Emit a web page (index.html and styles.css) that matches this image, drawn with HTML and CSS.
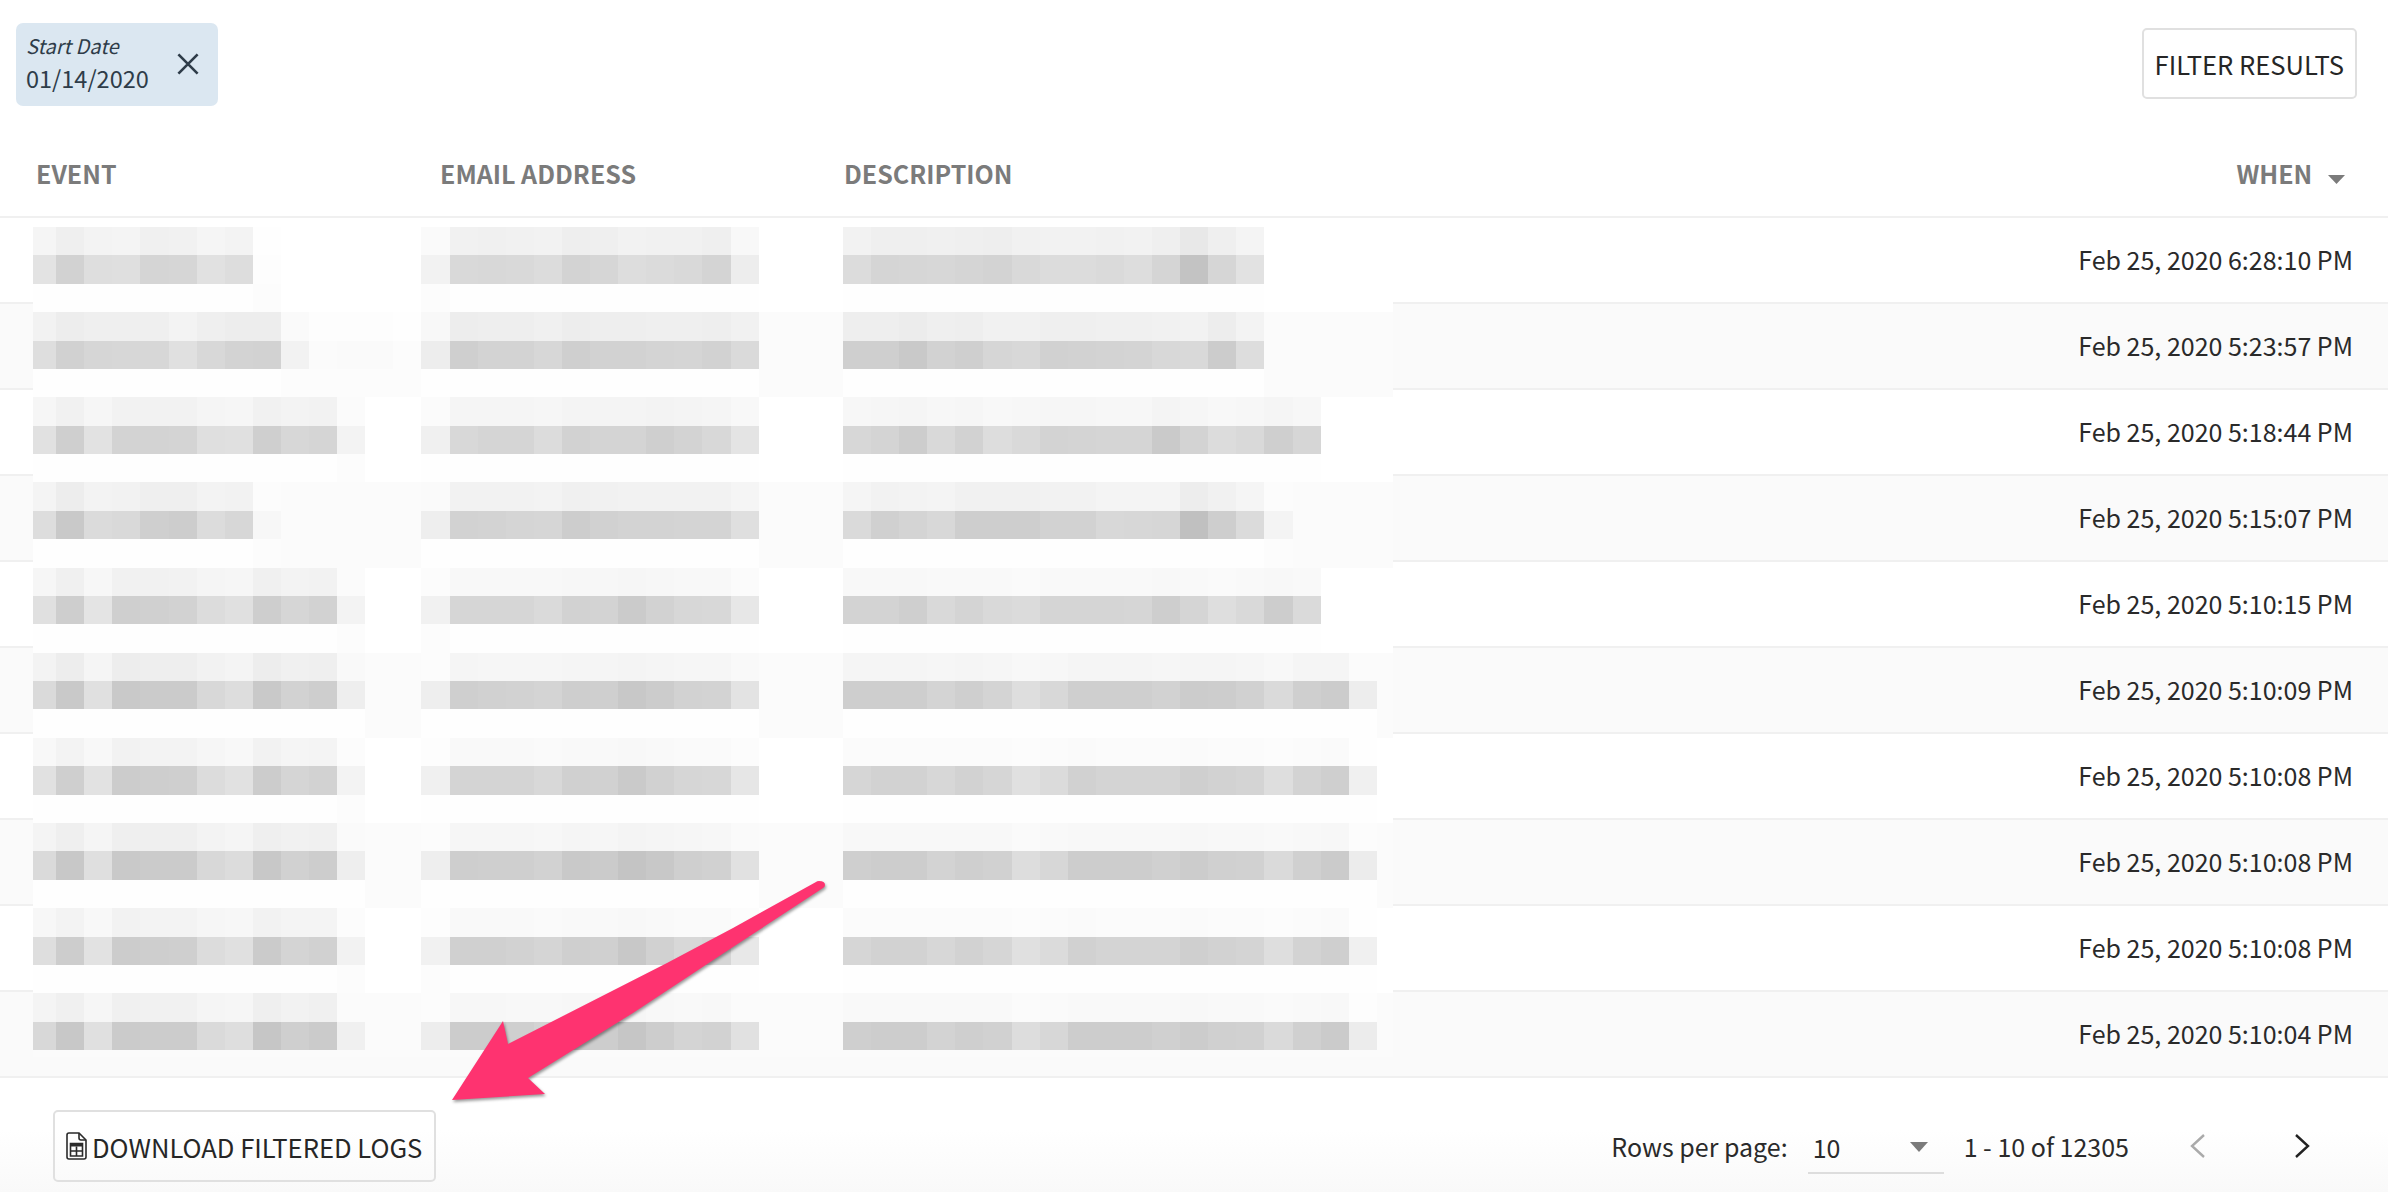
FILE: index.html
```html
<!DOCTYPE html>
<html>
<head>
  <meta charset="UTF-8">
  <title>Audit logs</title>
  <link rel="stylesheet" href="styles.css">
</head>
<body>
  <div class="page">

    <div class="filters">
      <div class="chip">
        <div class="chip-text">
          <div class="chip-label">Start Date</div>
          <div class="chip-value">01/14/2020</div>
        </div>
        <svg class="chip-close" viewBox="0 0 20 20"><path d="M2 2L18 18M18 2L2 18"/></svg>
      </div>
      <button class="btn btn-filter">FILTER RESULTS</button>
    </div>

    <div class="table">
      <div class="row head">
        <div>EVENT</div>
        <div>EMAIL ADDRESS</div>
        <div>DESCRIPTION</div>
        <div class="when">WHEN <svg class="sort" viewBox="0 0 17 9"><path d="M0 0H17L8.5 9Z"/></svg></div>
      </div>
      <div class="row"><div></div><div></div><div></div><div class="when">Feb 25, 2020 6:28:10 PM</div></div>
      <div class="row"><div></div><div></div><div></div><div class="when">Feb 25, 2020 5:23:57 PM</div></div>
      <div class="row"><div></div><div></div><div></div><div class="when">Feb 25, 2020 5:18:44 PM</div></div>
      <div class="row"><div></div><div></div><div></div><div class="when">Feb 25, 2020 5:15:07 PM</div></div>
      <div class="row"><div></div><div></div><div></div><div class="when">Feb 25, 2020 5:10:15 PM</div></div>
      <div class="row"><div></div><div></div><div></div><div class="when">Feb 25, 2020 5:10:09 PM</div></div>
      <div class="row"><div></div><div></div><div></div><div class="when">Feb 25, 2020 5:10:08 PM</div></div>
      <div class="row"><div></div><div></div><div></div><div class="when">Feb 25, 2020 5:10:08 PM</div></div>
      <div class="row"><div></div><div></div><div></div><div class="when">Feb 25, 2020 5:10:08 PM</div></div>
      <div class="row"><div></div><div></div><div></div><div class="when">Feb 25, 2020 5:10:04 PM</div></div>
    </div>

    <div class="footer">
      <button class="btn btn-download">
        <svg class="doc" viewBox="0 0 21 28">
          <path class="doc-line" d="M3 1H13L20 8V25a2 2 0 0 1-2 2H3a2 2 0 0 1-2-2V3a2 2 0 0 1 2-2Z"/>
          <path class="doc-line" d="M13 1V6a2 2 0 0 0 2 2H20"/>
          <path class="doc-line" d="M4.5 11.5H16.5V24H4.5ZM4.5 19H16.5M10.5 14.5V24"/>
          <path class="doc-fill" d="M4.5 11.5H16.5V14.5H4.5Z"/>
        </svg>
        DOWNLOAD FILTERED LOGS
      </button>
      <div class="pager">
        <span class="rows-label">Rows per page:</span>
        <div class="rows-select">
          <span>10</span>
          <svg class="select-arrow" viewBox="0 0 18 10"><path d="M0 0H18L9 10Z"/></svg>
        </div>
        <span class="range">1 - 10 of 12305</span>
        <svg class="chev chev-off" viewBox="0 0 16 24"><path d="M14 1L2 12L14 23"/></svg>
        <svg class="chev chev-on" viewBox="0 0 16 24"><path d="M2 1L14 12L2 23"/></svg>
      </div>
    </div>

    <svg class="mosaic" id="mosaic" viewBox="0 0 2388 1192" shape-rendering="crispEdges"></svg>

    <svg class="arrow" viewBox="0 0 2388 1192">
      <path d="M819 881Q825 881 825 885Q825 887 823 888L733 947L633 1013Q570 1052 528 1078L545 1094L452 1100L503 1021L508 1044L667 963L733 928L816 882Q817 881 819 881Z"/>
    </svg>

  </div>
  <script src="mosaic.js"></script>
</body>
</html>
```

FILE: styles.css
```css
* { box-sizing: border-box; }
body { margin: 0; background: #fff; color: #2a2a2a; font-family: "Noto Sans CJK SC", "Noto Sans", sans-serif; font-size: 25px; }
.page { position: relative; width: 2388px; height: 1192px; overflow: hidden; display: flex; flex-direction: column; }

.filters { height: 132px; padding: 23px 31px 0 16px; display: flex; justify-content: space-between; align-items: flex-start; }
.chip { width: 202px; height: 83px; padding: 0 18px 0 10px; background: #dbe7f1; border-radius: 7px; color: #2e3c49; display: flex; justify-content: space-between; align-items: center; }
.chip-text { margin-top: -3px; }
.chip-label { font-size: 20px; font-style: italic; line-height: 30px; }
.chip-value { font-size: 23.5px; line-height: 34px; }
.chip-close { width: 24px; height: 24px; margin-top: -2px; }
.chip-close path { stroke: #2e3c49; stroke-width: 2.2; fill: none; }

.btn { background: transparent; border: 2px solid #e0e0e0; border-radius: 5px; color: #262626; font-family: inherit; font-size: 25.6px; padding: 0 11px; }
.btn-filter { height: 71px; margin-top: 5px; }
.btn-download { height: 72px; display: flex; align-items: center; gap: 5px; padding: 0 12px 0 11px; }
.doc { width: 21px; height: 28px; flex: none; }
.doc-line { fill: none; stroke: #2a2a2a; stroke-width: 1.6; }
.doc-fill { fill: #2a2a2a; }

.row { height: 86px; padding: 0 35px 2px 36px; border-bottom: 2px solid #f0f0f0; display: grid; grid-template-columns: 404px 404px 404px 1fr; align-items: center; }
.row:nth-child(odd) { background: #fafafa; }
.head, .head:nth-child(odd) { background: #fff; color: #7b7b7b; font-weight: 700; }
.when { text-align: right; }
.sort { width: 17px; height: 9px; margin-left: 10px; margin-right: 8px; }
.sort path, .select-arrow path { fill: #7b7b7b; }

.footer { flex: 1; padding-top: 32px; padding-left: 53px; display: flex; justify-content: space-between; background: linear-gradient(#fff 45%, #f9f9f9); }
.pager { height: 72px; padding-right: 78px; display: flex; align-items: center; }
.rows-select { width: 136px; height: 52px; margin-left: 20px; margin-top: 4px; padding: 0 16px 0 5px; border-bottom: 2px solid #ddd; display: flex; justify-content: space-between; align-items: center; }
.select-arrow { width: 18px; height: 10px; }
.range { margin-left: 20px; }
.chev { width: 16px; height: 24px; }
.chev path { fill: none; stroke-width: 2.4; }
.chev-off { margin-left: 61px; }
.chev-off path { stroke: #aaa; }
.chev-on { margin-left: 88px; }
.chev-on path { stroke: #222; }

.mosaic, .arrow { position: absolute; top: 0; left: 0; width: 2388px; height: 1192px; pointer-events: none; }
.arrow path { fill: #fe3370; filter: drop-shadow(1px 2px 1.5px rgba(0, 0, 0, 0.4)); }
```

FILE: mosaic.js
```js
// pixelated cells over the hidden table columns, grey value per cell
const GRID_X = 28, CELL_W = 28.1;
const GRID_Y = 227, CELL_H = 28.38;
const LEFT = 33, RIGHT = 1393, BOTTOM = 1057;

const EVENT_COL = 0, EMAIL_COL = 14, DESC_COL = 29;

const rows = [
  ["e3 d2 de df d5 d6 e1 dd fd",
   "f2 d9 d8 d9 dc d3 d6 dd db d9 d4 ed",
   "dc d5 d6 d7 d5 d3 d9 dc dc da dd d5 c3 d6 e2"],
  ["de d1 d6 d7 d7 e0 d8 d3 d2 f2 fb fa fa fc",
   "ed cf d3 d3 d7 cf d2 d2 d4 d5 d2 da",
   "cf cf c9 d2 cf d6 d8 d1 d2 d3 d4 d8 d9 cc dd"],
  ["e1 cf e2 d3 d3 d4 df e0 cf d7 d5 f3",
   "f0 d8 d5 d5 dc d2 d4 d4 cf d3 d8 e4",
   "d7 d4 cd d9 d2 dd d9 d3 d4 d5 d5 ca d3 dc d9 cf d6"],
  ["dd c9 db d9 cf cd dc d7 f7",
   "ee d2 d3 d5 d6 cd d1 d3 d3 d4 d4 df",
   "da d0 d4 d8 ce ce ce d2 d2 d8 d7 d6 c0 ce db f4"],
  ["e0 ce e4 cf d0 d2 dc e0 ce d6 d2 f3",
   "f1 d6 d6 d6 da d2 d3 cb d2 d7 d8 e7",
   "d3 d3 cf d9 d4 d9 db d5 d5 d5 d6 ce d5 de d9 cd da"],
  ["da c9 e0 c9 cb cb d8 dd c9 d2 ce ee",
   "ee cf d1 d2 d4 ce cf c8 cc d2 d3 e3",
   "ce ce ce d4 cf d4 de d8 cf cf cf d2 cc cd d1 da cf cc ed"],
  ["e1 cf e2 cc ce cf dc e1 cc d5 d2 f3",
   "f0 d4 d4 d4 d8 d0 d1 ca d1 d6 d7 e6",
   "d6 d2 d2 d7 d2 d6 e0 db d1 d4 d4 d4 cf d2 d4 de d3 cf f0"],
  ["da c8 df c9 cb cb d8 dc c8 d1 cd ee",
   "ee ce cf cf d2 c9 cb c4 c8 cf d1 e1",
   "cf cd cd d3 cf d1 dd d7 cd cd cd d0 cc d0 d1 da d0 cb ec"],
  ["de cd e2 cc ce cf dc e0 cb d4 d1 f2",
   "f1 d0 d0 d2 d5 cf d0 c8 d1 d8 d6 e8",
   "d6 d2 d2 d7 d2 d6 e0 db d1 d4 d4 d4 cf d2 d4 de d3 cf f0"],
  ["d8 c8 e0 cb cc cc da de c6 cf cb f0",
   "ed cc cc cf d3 cc cd c6 cd d4 d2 e1",
   "cf cd cd d3 cf d1 dd d7 cd cd cd d0 cc d0 d1 da d0 cb ec"]
];

// how strong the upper half of a blurred line is, per column
const upper = [
  [.35, .38, .38], [.4, .38, .35], [.3, .25, .2], [.33, .3, .28], [.3, .18, .15],
  [.33, .2, .2], [.25, .13, .1], [.3, .18, .15], [.25, .13, .1], [.28, .15, .13]
];

const svg = document.getElementById("mosaic");

function grey(v) {
  const h = Math.round(v).toString(16).padStart(2, "0");
  return "#" + h + h + h;
}

function addRect(x1, y1, x2, y2, fill) {
  const r = document.createElementNS("http://www.w3.org/2000/svg", "rect");
  r.setAttribute("x", Math.round(x1));
  r.setAttribute("y", Math.round(y1));
  r.setAttribute("width", Math.round(x2) - Math.round(x1));
  r.setAttribute("height", Math.round(y2) - Math.round(y1));
  r.setAttribute("fill", fill);
  svg.appendChild(r);
}

function bandY(i) {
  return Math.min(GRID_Y + CELL_H * i, BOTTOM);
}

// base layer, follows the stripes of the table rows underneath
for (let i = 0; i < 30; i++) {
  const y1 = bandY(i);
  const tableRow = Math.floor((y1 + CELL_H / 2 - 218) / 86);
  addRect(LEFT, y1, RIGHT, bandY(i + 1), tableRow % 2 ? "#fbfbfb" : "#ffffff");
}

function addCells(values, startCol, band, colour) {
  values.forEach((v, k) => {
    const x1 = Math.max(GRID_X + CELL_W * (startCol + k), LEFT);
    const x2 = GRID_X + CELL_W * (startCol + k + 1);
    addRect(x1, bandY(band), x2, bandY(band + 1), colour(parseInt(v, 16)));
  });
}

rows.forEach((row, r) => {
  [EVENT_COL, EMAIL_COL, DESC_COL].forEach((col, c) => {
    const values = row[c].split(" ");
    const top = r * 3;
    addCells(values, col, top, v => grey(255 - (255 - v) * upper[r][c]));
    addCells(values, col, top + 1, v => grey(v));
    // the last gap sits on the striped row, so it stays as the base colour
    if (r < 9) addCells(values, col, top + 2, v => v > 0xf0 ? "#fcfcfc" : "#fefefe");
  });
});
```
